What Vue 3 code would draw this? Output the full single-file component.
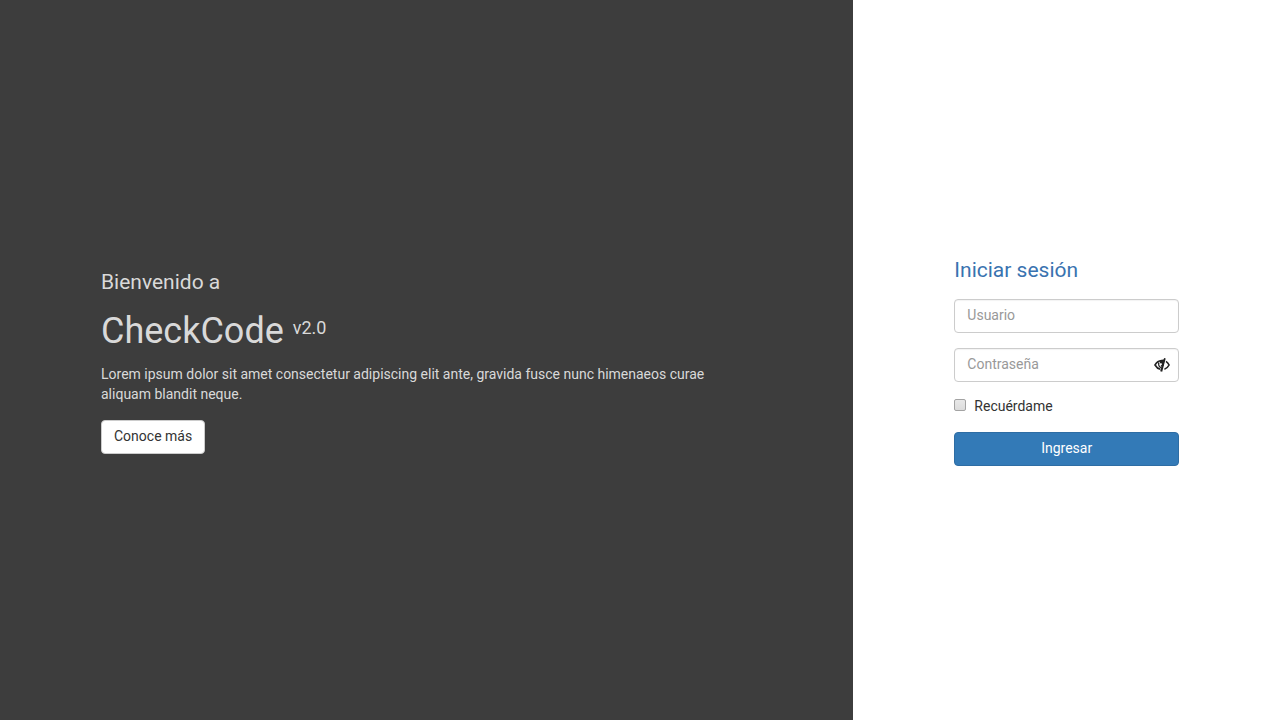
<script setup>
import { ref } from 'vue'

const user = ref('')
const password = ref('')
const remember = ref(false)
const visible = ref(false)
</script>

<template>
  <main class="page">
    <section class="intro">
      <p class="welcome">Bienvenido a</p>
      <h1 class="brand">CheckCode <sup class="version">v2.0</sup></h1>
      <p class="lead">Lorem ipsum dolor sit amet consectetur adipiscing elit ante, gravida fusce nunc himenaeos curae aliquam blandit neque.</p>
      <button type="button" class="btn more">Conoce más</button>
    </section>
    <section class="login">
      <form class="form" @submit.prevent>
        <h2 class="title">Iniciar sesión</h2>
        <input v-model="user" class="field" type="text" placeholder="Usuario" aria-label="Usuario" />
        <div class="password">
          <input v-model="password" class="field" :type="visible ? 'text' : 'password'" placeholder="Contraseña" aria-label="Contraseña" />
          <button type="button" class="toggle" aria-label="Mostrar contraseña" @click="visible = !visible">
            <svg width="16" height="14" viewBox="0 0 16 14" aria-hidden="true">
              <path d="M7.500 2.600C4.300 2.800 2.200 5 1 7c1.100 1.900 2.900 3.700 5.300 4.300" fill="none" stroke="#222" stroke-width="1.600" />
              <path d="M4.800 4.500C4.200 7 5 9.200 7.300 9.600" fill="none" stroke="#222" stroke-width="1.300" />
              <path d="M10.200 0l1.500.4L8.200 13.800l-2-.5 1.100-4.200L8.300 6 6 2.500c1.200-.6 2.200-.9 3.500-.9z" fill="#222" />
              <path d="M6 2.600L10.500 2 9.400 8 7.800 8.800 6.600 7.800 8 6.500 7.400 5 5.800 5.400z" fill="#222" />
              <path d="M12 3.300C13.400 4.200 14.500 5.700 15.100 7c-1 1.900-2.600 3.600-4.700 4.200" fill="none" stroke="#222" stroke-width="1.600" />
            </svg>
          </button>
        </div>
        <label class="remember">
          <input v-model="remember" class="check" type="checkbox" />
          <span>Recuérdame</span>
        </label>
        <button type="submit" class="btn submit">Ingresar</button>
      </form>
    </section>
  </main>
</template>

<style>
body {
  margin: 0;
}
</style>

<style scoped>
.page {
  display: grid;
  grid-template-columns: 2fr 1fr;
  min-height: 100vh;
  font: 400 14px/20px Roboto, sans-serif;
  color: #333;
  background: #fff;
}
.page * {
  box-sizing: border-box;
}
.intro,
.login {
  display: flex;
  flex-direction: column;
  justify-content: center;
  padding: 4px 101px 0;
}
.intro {
  align-items: flex-start;
  background: #3d3d3d;
  color: #d9d9d9;
}
.welcome {
  margin: 0 0 17px;
  font-size: 21px;
  line-height: 24px;
}
.brand {
  margin: 0 0 13px;
  font-size: 36px;
  font-weight: 400;
  line-height: 40px;
}
.version {
  font-size: 18px;
  line-height: 0;
  vertical-align: 9px;
}
.lead {
  margin: 0 0 16px;
}
.btn {
  height: 34px;
  padding: 0 12px 2px;
  border: 1px solid #ccc;
  border-radius: 4px;
  font: 400 14px/20px Roboto, sans-serif;
  cursor: pointer;
}
.more {
  background: #fff;
  color: #333;
}
.form {
  display: flex;
  flex-direction: column;
}
.title {
  margin: 0 0 17px;
  font-size: 21px;
  font-weight: 400;
  line-height: 24px;
  color: #3973b0;
}
.field {
  width: 100%;
  height: 34px;
  padding: 5px 12px 7px;
  border: 1px solid #ccc;
  border-radius: 4px;
  background: #fff;
  box-shadow: inset 0 1px 1px rgba(0, 0, 0, 0.05);
  font: 400 14px/20px Roboto, sans-serif;
  color: #555;
}
.field::placeholder {
  color: #999;
  opacity: 1;
}
.password {
  position: relative;
  margin-top: 15px;
}
.toggle {
  position: absolute;
  top: 10px;
  right: 9px;
  display: flex;
  padding: 0;
  border: 0;
  background: none;
  cursor: pointer;
}
.remember {
  display: flex;
  align-items: flex-start;
  gap: 8px;
  margin: 14px 0 16px;
}
.check {
  appearance: none;
  width: 12px;
  height: 12px;
  margin: 3px 0 0;
  border: 1px solid #a3a3a3;
  border-radius: 2px;
  background: linear-gradient(#e8e8e8, #dcdcdc);
}
.check:checked {
  background: #337ab7;
}
.submit {
  border-color: #2e6da4;
  background: #337ab7;
  color: #fff;
}
</style>
